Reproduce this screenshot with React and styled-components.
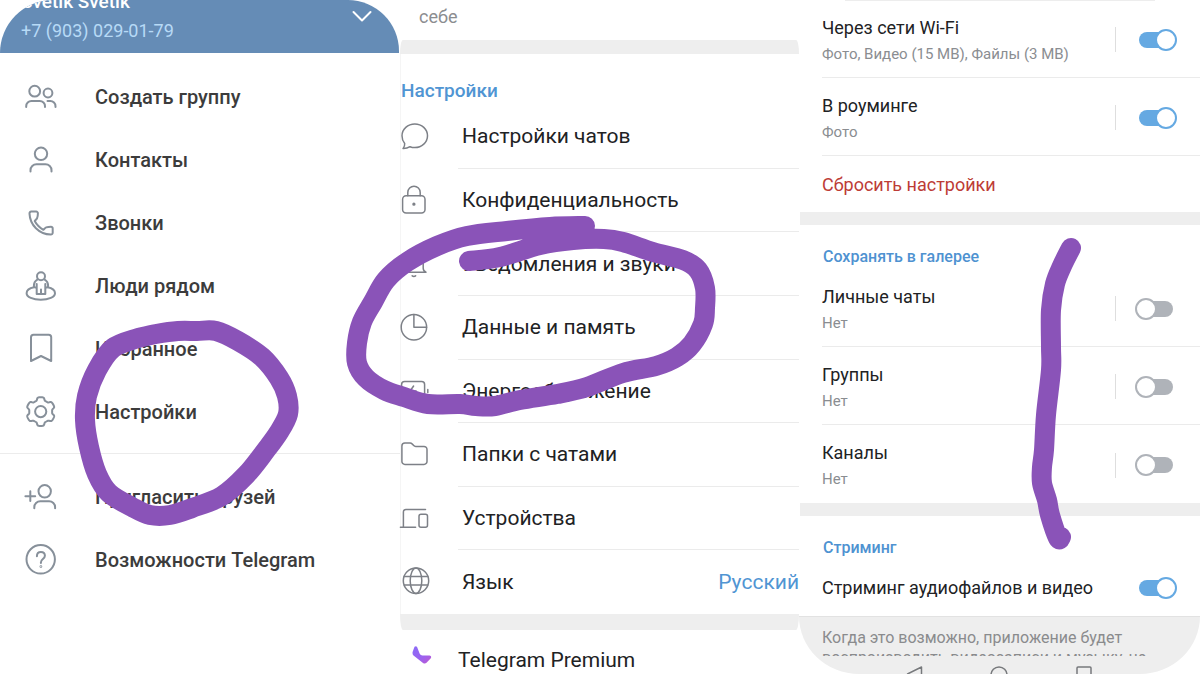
import React from "react";
import styled, { createGlobalStyle, css } from "styled-components";

const GlobalStyle = createGlobalStyle`
  *, *::before, *::after { box-sizing: border-box; }
  body { margin: 0; background: #fff; font-family: Roboto, "Noto Sans", sans-serif; }
  button { font: inherit; border: 0; padding: 0; background: none; text-align: left; cursor: pointer; }
  ul { list-style: none; margin: 0; padding: 0; }
  h2, p { margin: 0; font-weight: inherit; }
`;

const Page = styled.main`
  display: grid;
  grid-template-columns: repeat(3, minmax(0, 1fr));
  height: 100vh;
  overflow: hidden;
`;

const Panel = styled.section`
  position: relative;
  display: flex;
  flex-direction: column;
  min-width: 0;
`;

const StrokeLayer = styled.svg`
  position: absolute;
  top: 0;
  left: 0;
  width: 400px;
  height: 674px;
  overflow: visible;
  pointer-events: none;
  fill: none;
  stroke: #8a53b8;
  stroke-width: 20;
  stroke-linecap: round;
  stroke-linejoin: round;
`;

const LineIcon = styled.svg`
  flex: none;
  width: ${(p) => p.$size}px;
  height: ${(p) => p.$size}px;
  overflow: visible;
  fill: none;
  stroke: ${(p) => p.$tone || "#87909a"};
  stroke-width: ${(p) => p.$weight || 2};
  stroke-linecap: round;
  stroke-linejoin: round;
`;

/* Drawer */

const Profile = styled.header`
  display: flex;
  justify-content: space-between;
  height: 53px;
  padding: 0 27px 0 21px;
  margin-right: 1px;
  overflow: hidden;
  border-radius: 56px 54px 0 0;
  background: #658cb6;
`;

const ProfileText = styled.div`
  display: flex;
  flex-direction: column;
  justify-content: flex-end;
  gap: 3px;
  padding-bottom: 10px;
`;

const ProfileName = styled.p`
  color: #fff;
  font-size: 19px;
  font-weight: 500;
  line-height: 28px;
`;

const ProfilePhone = styled.p`
  color: #b7daf6;
  font-size: 18px;
  line-height: 24px;
`;

const Expand = styled.button`
  display: flex;
  align-items: flex-start;
  padding-top: 10px;
`;

const Menu = styled.ul`
  padding: ${(p) => (p.$last ? "11px 0" : "12px 0 10px")};
  ${(p) => !p.$last && css`border-bottom: 1px solid #ececec;`}
`;

const MenuButton = styled.button`
  display: flex;
  align-items: center;
  gap: 38px;
  width: 100%;
  height: 63px;
  padding-left: 25px;
  color: #3c3c3c;
  font-size: 20px;
  font-weight: 500;
`;

/* Settings list */

const Hint = styled.p`
  height: 40px;
  padding: 6px 0 0 19px;
  color: #8b8d90;
  font-size: 18px;
  line-height: 22px;
`;

const Band = styled.div`
  flex: none;
  height: ${(p) => p.$height}px;
  margin-right: ${(p) => (p.$radius ? 1 : 0)}px;
  background: #eee;
  border-radius: ${(p) => p.$radius || "0"};
`;

const SettingsBody = styled.div`
  margin-right: 1px;
  border-left: 1px solid #f5f5f5;
`;

const SettingsTitle = styled.h2`
  padding-top: 24px;
  height: 51px;
  color: #5095d3;
  font-size: 19px;
  font-weight: 500;
  line-height: 26px;
`;

const SettingsList = styled.ul`
  display: grid;
  grid-auto-rows: 1fr;
  min-height: 509px;
`;

const SettingsItem = styled.li`
  display: flex;

  &:last-child span { border-bottom: 0; }
`;

const SettingsButton = styled.button`
  display: flex;
  align-items: center;
  gap: 29px;
  width: 100%;
  color: #212224;
  font-size: 21px;
`;

const SettingsLabel = styled.span`
  display: flex;
  flex: 1;
  align-items: center;
  justify-content: space-between;
  align-self: stretch;
  padding-left: 4px;
  border-bottom: 1px solid #ebebeb;
`;

const Value = styled.em`
  color: #5095d3;
  font-style: normal;
`;

const PremiumButton = styled.button`
  display: flex;
  flex: none;
  align-items: center;
  gap: 26px;
  height: 60px;
  padding-left: 12px;
  color: #212224;
  font-size: 21px;
`;

/* Data and storage */

const SheetEdge = styled.div`
  position: absolute;
  top: 0;
  left: 45px;
  right: 45px;
  height: 1px;
  background: #ededed;
`;

const Option = styled.label`
  display: flex;
  flex: none;
  align-items: center;
  height: ${(p) => (p.$single ? 56 : 78)}px;
  margin-left: 22px;
  padding: ${(p) => (p.$single ? 0 : 2)}px 27px 0 0;
  ${(p) => p.$line && css`border-bottom: 1px solid #ebebeb;`}
`;

const OptionText = styled.span`
  display: flex;
  flex: 1;
  flex-direction: column;
  gap: 2px;
  padding-top: ${(p) => (p.$single ? 0 : 2)}px;
`;

const OptionTitle = styled.span`
  color: #212224;
  font-size: 18px;
  line-height: 24px;
`;

const OptionNote = styled.span`
  color: #8a8d91;
  font-size: 15px;
  line-height: 24px;
`;

const Separator = styled.span`
  width: 1px;
  height: 25px;
  margin-right: 23px;
  background: #dedede;
`;

const Toggle = styled.input`
  appearance: none;
  position: relative;
  width: 34px;
  height: 16px;
  margin: 0;
  border-radius: 8px;
  background: #afb3b9;

  &::before {
    content: "";
    position: absolute;
    top: -3px;
    left: -4px;
    width: 22px;
    height: 22px;
    border: 2px solid #afb3b9;
    border-radius: 50%;
    background: #fff;
  }

  &:checked { background: #65a9e2; }
  &:checked::before { left: 16px; border-color: #65a9e2; }
`;

const ResetButton = styled.button`
  flex: none;
  height: 56px;
  padding-left: 22px;
  color: #bd3c36;
  font-size: 18px;
`;

const GroupTitle = styled.h2`
  height: 44px;
  padding: 20px 0 0 23px;
  color: #4e92d1;
  font-size: 16px;
  font-weight: 500;
  line-height: 24px;
`;

const Footer = styled.footer`
  flex: none;
  height: 58px;
  margin-left: -1px;
  overflow: hidden;
  border-top: 1px solid #e2e2e2;
  border-radius: 0 0 60px 60px / 0 0 58px 58px;
  background: #eee;
`;

const FootNote = styled.p`
  height: 39px;
  padding: 11px 23px 0 23px;
  overflow: hidden;
  color: #8a8b8d;
  font-size: 16px;
  line-height: 20px;
  white-space: nowrap;
`;

const SystemBar = styled.nav`
  display: flex;
  justify-content: space-between;
  padding: 9px 107px 0 106px;
`;

const SystemButton = styled.button`
  display: flex;
`;

/* Cog outline: six flat teeth around (cx, cy) */
const cogPath = (cx, cy) => {
  const points = Array.from({ length: 144 }, (_, i) => {
    const a = (i / 144) * Math.PI * 2;
    const r = 12.9 + 1.5 * Math.tanh(2.6 * (Math.cos(6 * a) + 0.15));
    return `${(cx + r * Math.sin(a)).toFixed(2)} ${(cy - r * Math.cos(a)).toFixed(2)}`;
  });
  return `M${points.join("L")}z`;
};

/* Smooth curve through a list of points */
const smoothPath = (pts) => {
  let d = `M${pts[0]}`;
  for (let i = 0; i < pts.length - 1; i++) {
    const p0 = pts[i - 1] || pts[i];
    const [p1, p2] = [pts[i], pts[i + 1]];
    const p3 = pts[i + 2] || p2;
    const c1 = [p1[0] + (p2[0] - p0[0]) / 6, p1[1] + (p2[1] - p0[1]) / 6];
    const c2 = [p2[0] - (p3[0] - p1[0]) / 6, p2[1] - (p3[1] - p1[1]) / 6];
    d += `C${c1} ${c2} ${p2}`;
  }
  return d;
};

const drawerStroke = [
  [138, 338], [156, 334], [178, 331], [197, 331], [216, 331], [238, 341], [262, 357], [279, 378], [287, 396], [288, 414],
  [279, 432], [266, 450], [246, 475], [222, 496], [192, 508], [170, 515], [150, 515], [132, 507], [109, 493],
  [97, 474], [89, 447], [85, 420], [87, 396], [97, 370], [113, 348], [138, 338],
];

const settingsStroke = [
  [185, 226], [150, 227], [107, 231], [67, 236], [37, 246], [7, 262], [-14, 280], [-27, 302], [-38, 322], [-43, 343],
  [-43, 363], [-34, 378], [-16, 390], [4, 397], [28, 404], [60, 404], [76, 406], [95, 406], [120, 400], [157, 394], [187, 387],
  [223, 373], [256, 366], [277, 357], [292, 344], [303, 324], [305, 308], [305, 288], [298, 270], [283, 260], [253, 252],
  [223, 242], [204, 239], [173, 240], [140, 245], [100, 257], [69, 261],
];

const galleryStroke = [
  [271, 248], [262, 266], [255, 284], [251, 310], [251, 347], [251, 370], [246, 415], [244, 450], [242, 467], [242, 483],
  [247, 500], [250, 515], [258, 538], [261, 537],
];

const drawer = [
  ["Создать группу", <>
    <circle cx="9.7" cy="10.2" r="5.4" /><circle cx="23" cy="12" r="4.4" />
    <path d="M1.2 26v-.8a5.2 5.2 0 0 1 5.2-5.2h8.4a5.2 5.2 0 0 1 5.2 5.2v.8M22.5 20h2.8a5.2 5.2 0 0 1 5.2 5.2v.8" />
  </>],
  ["Контакты", <>
    <circle cx="16" cy="9.8" r="6.2" /><path d="M5.5 27.4v-1.2a6 6 0 0 1 6-6h9a6 6 0 0 1 6 6v1.2" />
  </>],
  ["Звонки", <path d="M6.2 4.6h5a1.7 1.7 0 0 1 1.7 1.7c0 1.8-.2 3.4-.8 4.8-.4 1-1.5 1.7-2.4 2.9 2 3.8 4.7 6.5 8.7 8.8 1-1 1.8-2 2.8-2.4 1.4-.5 3-.7 4.8-.7a1.7 1.7 0 0 1 1.7 1.7v4.4a1.8 1.8 0 0 1-1.9 1.8C14 27.3 5 18 4.5 6.6a1.8 1.8 0 0 1 1.7-2z" />],
  ["Люди рядом", <>
    <circle cx="16" cy="6.2" r="4" />
    <path d="M12.3 9.6C10 11 8.800 13.200 8.900 16.200c.1 1.200 1.400 1.600 2.800 1.200v6.600h8.600v-6.600c1.400.4 2.700 0 2.800-1.200.1-3-1.100-5.200-3.400-6.600M16 19.500v4.500M11.700 14v3.400M20.300 14v3.400" />
    <path d="M9 17.200c-4.400.9-7.400 3.200-7.400 6 0 3.800 6.400 6.600 14.200 6.600s14.200-2.800 14.200-6.600c0-2.800-3-5.100-7.400-6" />
  </>],
  ["Избранное", <path d="M6 28V4.300a2.500 2.500 0 0 1 2.500-2.500h15.200a2.500 2.500 0 0 1 2.500 2.500V28L16 23z" />],
  ["Настройки", <><circle cx="15.700" cy="15.600" r="5.600" /><path d={cogPath(15.7, 15.6)} /></>],
];

const drawerExtra = [
  ["Пригласить друзей", <>
    <circle cx="19.700" cy="10.300" r="6.200" /><path d="M9.300 27.200v-1a6 6 0 0 1 6-6h8.800a6 6 0 0 1 6 6v1M5.300 10.300v9.800M.4 15.200h9.800" />
  </>],
  ["Возможности Telegram", <>
    <circle cx="15.700" cy="15.300" r="14.200" />
    <path d="M11.900 12.200c0-2.600 1.700-4.200 4-4.200s4 1.500 4 3.800c0 3.200-4 3.400-4 6.600v.6" /><circle cx="15.900" cy="22.600" r=".4" />
  </>],
];

const settings = [
  ["Настройки чатов", <path d="M2 25.600c1.200-1.600 1.900-3.400 1.700-5.200A11.300 11.300 0 0 1 1 12.800C1 6.200 6.800.9 13.800.9s12.700 5.300 12.700 11.900-5.700 11.800-12.700 11.800c-1.800 0-3.300-.3-4.800-.9-2 1.300-4.500 2-7 1.900z" />],
  ["Конфиденциальность", <>
    <rect x="1.600" y="9.700" width="22.400" height="17.300" rx="3.500" /><path d="M6.800 9.700V6.400a6.200 6.200 0 0 1 12.400 0v3.300" /><circle cx="12.900" cy="18.200" r=".9" fill="#7d8087" />
  </>],
  ["Уведомления и звуки", <path d="M1 22.300h24c-2-.8-2.800-2-2.800-4V11a9 9 0 0 0-18 0v7.300q0 3-3.200 4M11.200 25.800q1.700 1.300 3.400 0" />],
  ["Данные и память", <><circle cx="12.900" cy="13.300" r="12.700" /><path d="M12.900.6v12.700h12.700" /></>],
  ["Энергосбережение", <>
    <rect x=".6" y="4.400" width="23" height="19" rx="3" /><path d="M26.800 12.500v3M12.600 9l-3.500 5h6l-3.500 5" />
  </>],
  ["Папки с чатами", <path d="M.9 5a3 3 0 0 1 3-3h5.200q1.200 0 2 .9l1.600 1.600q.8.900 2 .9h8.300a3 3 0 0 1 3 3v12a3 3 0 0 1-3 3H3.900a3 3 0 0 1-3-3z" />],
  ["Устройства", <>
    <path d="M24.500 4.400H4.900a2.500 2.500 0 0 0-2.500 2.500v15.300M-.6 22.200h15.200" /><rect x="18" y="9.200" width="8.500" height="13" rx="2" />
  </>],
  ["Язык", <>
    <circle cx="15" cy="12.700" r="12.700" /><ellipse cx="15" cy="12.700" rx="5.800" ry="12.700" /><path d="M3.300 8.400h23.400M3.300 17h23.400" />
  </>, "Русский"],
];

const network = [
  ["Через сети Wi-Fi", "Фото, Видео (15 MB), Файлы (3 MB)"],
  ["В роуминге", "Фото"],
];

const gallery = ["Личные чаты", "Группы", "Каналы"];

function DrawerItems({ items, last }) {
  return (
    <Menu $last={last}>
      {items.map(([label, icon]) => (
        <li key={label}>
          <MenuButton>
            <LineIcon $size={32} viewBox="0 0 32 32" aria-hidden="true">{icon}</LineIcon>
            {label}
          </MenuButton>
        </li>
      ))}
    </Menu>
  );
}

function ToggleOption({ title, note, on, line }) {
  return (
    <Option $line={line} $single={!note}>
      <OptionText $single={!note}>
        <OptionTitle>{title}</OptionTitle>
        {note && <OptionNote>{note}</OptionNote>}
      </OptionText>
      {note && <Separator />}
      <Toggle type="checkbox" defaultChecked={on} />
    </Option>
  );
}

function Marker({ points }) {
  return (
    <StrokeLayer viewBox="0 0 400 674" aria-hidden="true">
      <path d={smoothPath(points)} />
    </StrokeLayer>
  );
}

export default function App() {
  return (
    <>
      <GlobalStyle />
      <Page>
        <Panel>
          <Profile>
            <ProfileText>
              <ProfileName>Svetik Svetik</ProfileName>
              <ProfilePhone>+7 (903) 029-01-79</ProfilePhone>
            </ProfileText>
            <Expand aria-label="Показать аккаунты">
              <LineIcon $size={20} $tone="#fff" viewBox="0 0 20 20"><path d="M1.500 2L10 10.500 18.500 2" /></LineIcon>
            </Expand>
          </Profile>
          <DrawerItems items={drawer} />
          <DrawerItems items={drawerExtra} last />
          <Marker points={drawerStroke} />
        </Panel>

        <Panel>
          <Hint>себе</Hint>
          <Band $height={14} $radius="3px 3px 0 0 / 14px 14px 0 0" />
          <SettingsBody>
            <SettingsTitle>Настройки</SettingsTitle>
            <SettingsList>
              {settings.map(([label, icon, value]) => (
                <SettingsItem key={label}>
                  <SettingsButton>
                    <LineIcon $size={28} $tone="#7d8087" $weight={1.5} viewBox="0 0 28 28" aria-hidden="true">{icon}</LineIcon>
                    <SettingsLabel>{label}{value && <Value>{value}</Value>}</SettingsLabel>
                  </SettingsButton>
                </SettingsItem>
              ))}
            </SettingsList>
          </SettingsBody>
          <Band $height={16} $radius="0 0 3px 3px / 0 0 16px 16px" />
          <PremiumButton>
            <svg width="20" height="28" viewBox="0 0 20 28" aria-hidden="true">
              <defs>
                <linearGradient id="premium" x1="0" y1="0" x2="1" y2="1">
                  <stop offset="0" stopColor="#8b6cf8" />
                  <stop offset=".6" stopColor="#9c62ee" />
                  <stop offset="1" stopColor="#c158cf" />
                </linearGradient>
              </defs>
              <path fill="url(#premium)" d="M2.500.8Q4.200-.6 5.200 1.300L7.600 7.500Q8.500 9.400 10.500 9.500L17.500 9.600Q20 10 18.800 12.300L14.500 16.800Q13 18.200 11 17L1.500 9.500Q.2 8.300.6 6z" />
            </svg>
            Telegram Premium
          </PremiumButton>
          <Marker points={settingsStroke} />
        </Panel>

        <Panel>
          <SheetEdge />
          {network.map(([title, note]) => (
            <ToggleOption key={title} title={title} note={note} on line />
          ))}
          <ResetButton>Сбросить настройки</ResetButton>
          <Band $height={13} />
          <GroupTitle>Сохранять в галерее</GroupTitle>
          {gallery.map((title, i) => (
            <ToggleOption key={title} title={title} note="Нет" line={i < gallery.length - 1} />
          ))}
          <Band $height={13} />
          <GroupTitle>Стриминг</GroupTitle>
          <ToggleOption title="Стриминг аудиофайлов и видео" on />
          <Footer>
            <FootNote>
              Когда это возможно, приложение будет<br />
              воспроизводить видеозаписи и музыку, не
            </FootNote>
            <SystemBar>
              <SystemButton aria-label="Назад">
                <LineIcon $size={18} $weight={1.5} $tone="#77797c" viewBox="0 0 18 18"><path d="M16.500 2v14L2.500 9z" /></LineIcon>
              </SystemButton>
              <SystemButton aria-label="Домой">
                <LineIcon $size={18} $weight={1.5} $tone="#77797c" viewBox="0 0 18 18"><circle cx="9" cy="10" r="8" /></LineIcon>
              </SystemButton>
              <SystemButton aria-label="Недавние">
                <LineIcon $size={18} $weight={1.5} $tone="#77797c" viewBox="0 0 18 18"><rect x="2" y="2" width="14" height="14" rx="1" /></LineIcon>
              </SystemButton>
            </SystemBar>
          </Footer>
          <Marker points={galleryStroke} />
        </Panel>
      </Page>
    </>
  );
}
